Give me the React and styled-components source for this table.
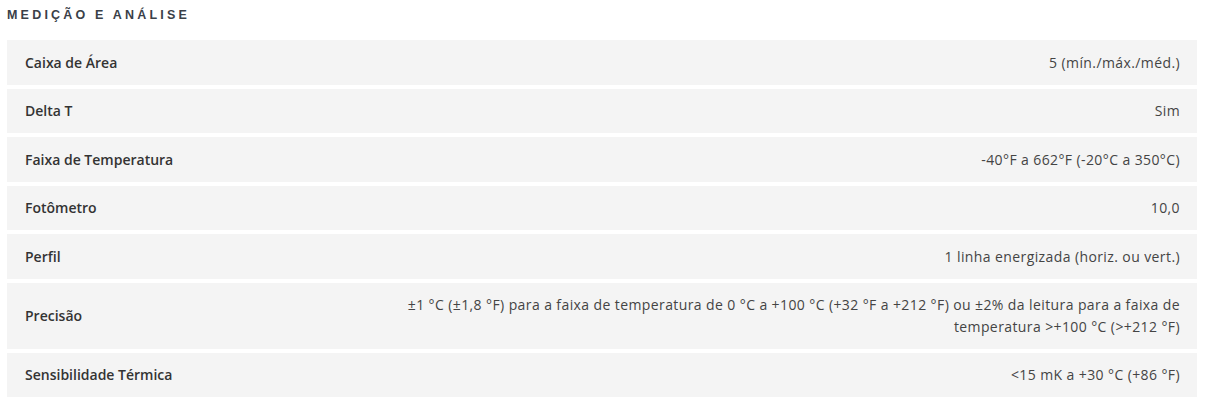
import styled, { createGlobalStyle } from "styled-components";

const Global = createGlobalStyle`
  body {
    margin: 0;
    background: #fff;
    font-family: "Open Sans", "Noto Sans", sans-serif;
  }
`;

const Section = styled.section`
  padding: 5px 13px 0 7px;
`;

const Heading = styled.h3`
  margin: 0 0 15px;
  font-family: "Liberation Sans", Arial, sans-serif;
  font-size: 12.5px;
  font-weight: 700;
  letter-spacing: 3.2px;
  line-height: 20px;
  color: #3a4048;
  text-transform: uppercase;
`;

const List = styled.div`
  display: flex;
  flex-direction: column;
  gap: 4px;
`;

const Row = styled.div`
  display: flex;
  justify-content: space-between;
  align-items: center;
  gap: 40px;
  background: #f4f4f4;
  padding: 11.5px 17px 11.5px 18px;
  font-size: 14px;
  line-height: 21.5px;
`;

const Label = styled.div`
  flex: 0 0 auto;
  font-weight: 600;
  color: #333;
`;

const Value = styled.div`
  max-width: 800px;
  text-align: right;
  color: #444;
  letter-spacing: 0.4px;
`;

const specs = [
  ["Caixa de Área", "5 (mín./máx./méd.)"],
  ["Delta T", "Sim"],
  ["Faixa de Temperatura", "-40°F a 662°F (-20°C a 350°C)"],
  ["Fotômetro", "10,0"],
  ["Perfil", "1 linha energizada (horiz. ou vert.)"],
  [
    "Precisão",
    "±1 °C (±1,8 °F) para a faixa de temperatura de 0 °C a +100 °C (+32 °F a +212 °F) ou ±2% da leitura para a faixa de temperatura >+100 °C (>+212 °F)",
  ],
  ["Sensibilidade Térmica", "<15 mK a +30 °C (+86 °F)"],
];

export default function App() {
  return (
    <>
      <Global />
      <Section>
        <Heading>Medição e Análise</Heading>
        <List>
          {specs.map(([label, value]) => (
            <Row key={label}>
              <Label>{label}</Label>
              <Value>{value}</Value>
            </Row>
          ))}
        </List>
      </Section>
    </>
  );
}
